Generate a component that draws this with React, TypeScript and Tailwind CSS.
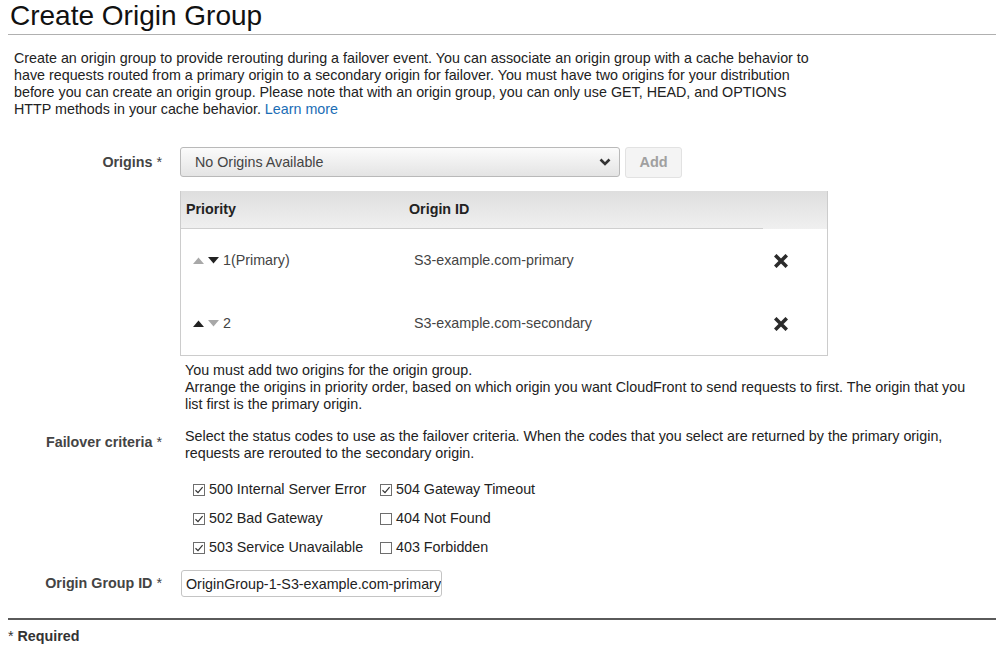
import { useState } from 'react';

type Origin = { id: string; label: string };

const origins: Origin[] = [
  { id: 'S3-example.com-primary', label: '1(Primary)' },
  { id: 'S3-example.com-secondary', label: '2' },
];

const codes = [
  { code: '500 Internal Server Error', checked: true },
  { code: '504 Gateway Timeout', checked: true },
  { code: '502 Bad Gateway', checked: true },
  { code: '404 Not Found', checked: false },
  { code: '503 Service Unavailable', checked: true },
  { code: '403 Forbidden', checked: false },
];

function Triangle({ up, active }: { up: boolean; active: boolean }) {
  return (
    <svg width="11" height="7" viewBox="0 0 11 7" className="block">
      <polygon
        points={up ? '0,7 5.5,0.5 11,7' : '0,0 11,0 5.5,6.5'}
        fill={active ? '#222' : '#a8a8a8'}
      />
    </svg>
  );
}

function RemoveIcon() {
  return (
    <svg width="14" height="14" viewBox="0 0 14 14" className="block">
      <path d="M2.5 2.5 L11.5 11.5 M11.5 2.5 L2.5 11.5" stroke="#2b2b2b" strokeWidth="3.6" strokeLinecap="square" />
    </svg>
  );
}

function Check({ checked }: { checked: boolean }) {
  return (
    <span className="w-[12px] h-[12px] border border-[#6e6e6e] bg-white flex items-center justify-center shrink-0">
      {checked && (
        <svg width="10" height="10" viewBox="0 0 10 10">
          <path d="M1.5 5.2 L4 7.6 L8.6 2.2" stroke="#333" strokeWidth="1.2" fill="none" />
        </svg>
      )}
    </span>
  );
}

function Label({ text, className = '' }: { text: string; className?: string }) {
  return (
    <div className={`w-[154px] shrink-0 text-right text-[#444] ${className}`}>
      <span className="font-bold">{text}</span> *
    </div>
  );
}

export default function App() {
  const [groupId, setGroupId] = useState('OriginGroup-1-S3-example.com-primary');

  return (
    <div className="min-h-[651px] bg-white pl-[8px] text-[14.3px] leading-[17px] text-[#222]" style={{ fontFamily: '"Liberation Sans", Arial, sans-serif' }}>
      <h1 className="text-[28px] leading-[32px] pl-[2px] pb-[2px] border-b border-[#b0b0b0] text-[#111]">Create Origin Group</h1>

      <p className="mt-[15px] pl-[6px]">
        Create an origin group to provide rerouting during a failover event. You can associate an origin group with a cache behavior to
        <br />
        have requests routed from a primary origin to a secondary origin for failover. You must have two origins for your distribution
        <br />
        before you can create an origin group. Please note that with an origin group, you can only use GET, HEAD, and OPTIONS
        <br />
        HTTP methods in your cache behavior. <a className="text-[#1a6db5]">Learn more</a>
      </p>

      {/* Origins */}
      <div className="flex mt-[29px]">
        <Label text="Origins" className="pt-[7px]" />
        <div className="ml-[18px] flex flex-col">
          <div className="flex items-start">
            <div className="w-[440px] h-[30px] rounded-[3px] border border-[#b9b9b9] bg-gradient-to-b from-[#fbfbfb] to-[#e4e4e4] flex items-center justify-between pl-[14px] pr-[8px] text-[#444]">
              <span>No Origins Available</span>
              <svg width="12" height="8" viewBox="0 0 12 8">
                <path d="M1.5 1.5 L6 6 L10.5 1.5" stroke="#333" strokeWidth="2.6" fill="none" />
              </svg>
            </div>
            <button className="ml-[5px] w-[57px] h-[31px] rounded-[3px] border border-[#e2e2e2] bg-[#f4f4f4] font-bold text-[14.5px] text-[#a0a0a0]">Add</button>
          </div>

          <div className="mt-[13px] w-[648px] border-x border-b border-[#cccccc]">
            <div className="h-[38px] flex bg-gradient-to-b from-[#dedede] to-[#f0f0f0] font-bold">
              <div className="w-[222px] pl-[5px] flex items-center border-b border-[#cfcfcf]">Priority</div>
              <div className="w-[360px] pl-[6px] flex items-center border-b border-[#cfcfcf]">Origin ID</div>
              <div className="flex-1" />
            </div>
            {origins.map((o, i) => (
              <div key={o.id} className="h-[63px] flex items-center text-[#444]">
                <div className="w-[222px] pl-[12px] flex items-center">
                  <Triangle up active={i > 0} />
                  <span className="ml-[4px]">
                    <Triangle up={false} active={i < origins.length - 1} />
                  </span>
                  <span className="ml-[4px]">{o.label}</span>
                </div>
                <div className="w-[360px] pl-[11px]">{o.id}</div>
                <div className="flex-1 pl-[11px]">
                  <RemoveIcon />
                </div>
              </div>
            ))}
          </div>

          <div className="mt-[6px] pl-[5px] whitespace-nowrap">
            You must add two origins for the origin group.
            <br />
            Arrange the origins in priority order, based on which origin you want CloudFront to send requests to first. The origin that you
            <br />
            list first is the primary origin.
          </div>
        </div>
      </div>

      {/* Failover criteria */}
      <div className="flex mt-[15px]">
        <Label text="Failover criteria" className="pt-[6px]" />
        <div className="ml-[18px]">
          <div className="pl-[5px] whitespace-nowrap">
            Select the status codes to use as the failover criteria. When the codes that you select are returned by the primary origin,
            <br />
            requests are rerouted to the secondary origin.
          </div>
          <div className="mt-[13px] pl-[13px] grid grid-cols-[187px_auto] w-max">
            {codes.map((c) => (
              <label key={c.code} className="h-[29px] flex items-center gap-[4px]">
                <Check checked={c.checked} />
                <span>{c.code}</span>
              </label>
            ))}
          </div>
        </div>
      </div>

      {/* Origin Group ID */}
      <div className="flex items-center mt-[8px]">
        <Label text="Origin Group ID" />
        <input
          value={groupId}
          onChange={(e) => setGroupId(e.target.value)}
          className="ml-[19px] w-[261px] h-[27px] rounded-[3px] border border-[#c4c4c4] pl-[4px] text-[14.3px] text-[#222] outline-none"
        />
      </div>

      <div className="mt-[21px] h-[2px] bg-[#5a5a5a]" />
      <div className="mt-[8px] text-[#333]">
        * <span className="font-bold">Required</span>
      </div>
    </div>
  );
}
